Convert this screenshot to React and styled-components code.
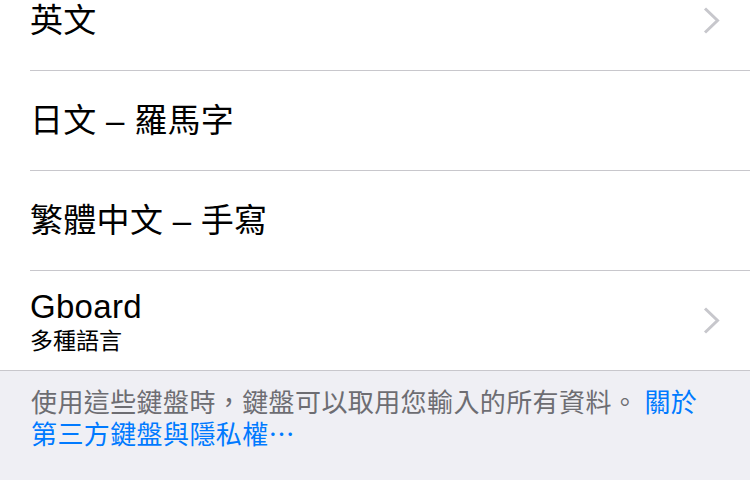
import React from "react";
import styled, { createGlobalStyle } from "styled-components";

const GlobalStyle = createGlobalStyle`
  html, body {
    margin: 0;
    padding: 0;
    background: #efeff4;
    overflow: hidden;
  }
  body {
    font-family: "Liberation Sans", "Noto Sans CJK TC", sans-serif;
    -webkit-font-smoothing: antialiased;
  }
`;

const Screen = styled.div`
  width: 750px;
  height: 480px;
  overflow: hidden;
  background: #efeff4;
`;

const List = styled.div`
  margin-top: -29px;
  background: #ffffff;
  border-bottom: 1px solid #c8c7cc;
`;

const Row = styled.div`
  display: flex;
  padding-left: 30px;
`;

const RowInner = styled.div`
  flex: 1;
  display: flex;
  align-items: center;
  justify-content: space-between;
  height: 99px;
  padding-right: 30px;
  border-bottom: ${(p) => (p.last ? "none" : "1px solid #c8c7cc")};
`;

const Labels = styled.div`
  display: flex;
  flex-direction: column;
`;

const Title = styled.div`
  font-size: 33px;
  line-height: 38px;
  letter-spacing: 0.3px;
  color: #000000;
  margin-top: ${(p) => (p.withSub ? "2px" : "0")};
`;

const Subtitle = styled.div`
  font-size: 23px;
  line-height: 30px;
  color: #000000;
`;

const Footer = styled.div`
  padding: 14px 30px 0 31px;
  font-family: "Noto Sans CJK TC", sans-serif;
  font-size: 26px;
  line-height: 32px;
  letter-spacing: 0.4px;
  color: #6d6d72;
`;

const Link = styled.span`
  color: #007aff;
`;

const Chevron = () => (
  <svg width="17" height="27" viewBox="0 0 17 27">
    <polyline
      points="2,1.5 14.5,13.5 2,25.5"
      fill="none"
      stroke="#c7c7cc"
      strokeWidth="3"
    />
  </svg>
);

const rows = [
  { title: "英文", chevron: true },
  { title: "日文 – 羅馬字" },
  { title: "繁體中文 – 手寫" },
  { title: "Gboard", sub: "多種語言", chevron: true },
];

const App = () => (
  <>
    <GlobalStyle />
    <Screen>
      <List>
        {rows.map((row, i) => (
          <Row key={row.title}>
            <RowInner last={i === rows.length - 1}>
              <Labels>
                <Title withSub={!!row.sub}>{row.title}</Title>
                {row.sub && <Subtitle>{row.sub}</Subtitle>}
              </Labels>
              {row.chevron && <Chevron />}
            </RowInner>
          </Row>
        ))}
      </List>
      <Footer>
        使用這些鍵盤時，鍵盤可以取用您輸入的所有資料。 <Link>關於</Link>
        <br />
        <Link>第三方鍵盤與隱私權…</Link>
      </Footer>
    </Screen>
  </>
);

export default App;
